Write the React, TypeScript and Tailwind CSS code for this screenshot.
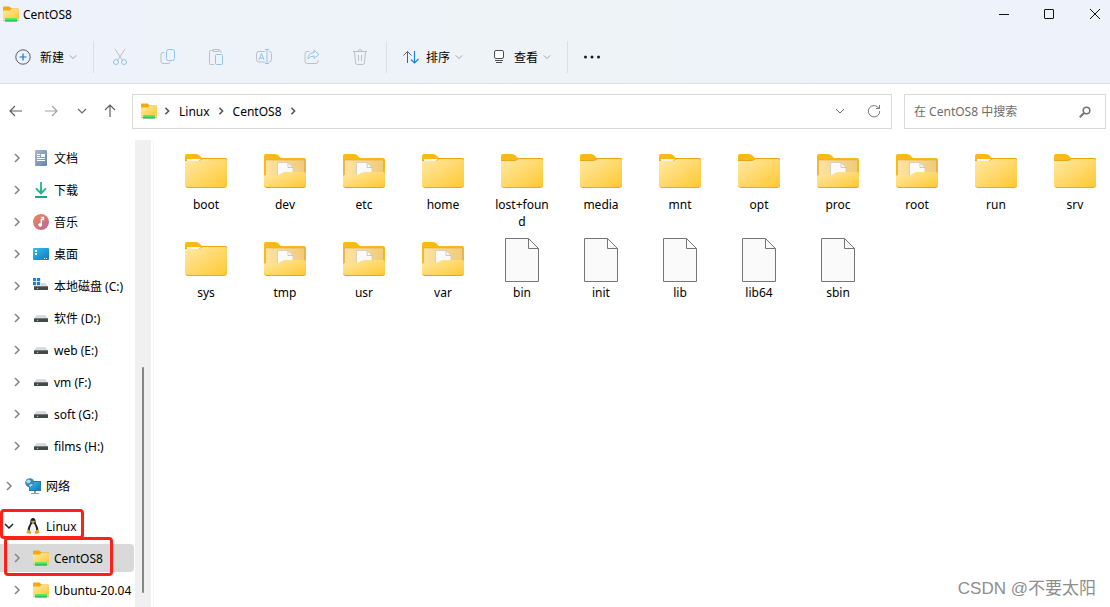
import type { ReactNode } from "react";

type ChevronProps = { className?: string; size?: string };

function Chevron({ className = "", size = "h-[10px] w-[10px]" }: ChevronProps) {
  return (
    <svg viewBox="0 0 10 10" className={`shrink-0 ${size} ${className}`} fill="none" stroke="currentColor" aria-hidden="true">
      <path d="M3 1l4 4-4 4" />
    </svg>
  );
}

function ChevronDown({ className = "", size = "h-[10px] w-[10px]" }: ChevronProps) {
  return (
    <svg viewBox="0 0 10 10" className={`shrink-0 ${size} ${className}`} fill="none" stroke="currentColor" aria-hidden="true">
      <path d="M1 3l4 4 4-4" />
    </svg>
  );
}

// every gradient used by the icons below, defined once for the page
function Gradients() {
  return (
    <svg width="0" height="0" className="absolute" aria-hidden="true">
      <defs>
        <linearGradient id="front" x1="0" y1="0" x2="1" y2="1">
          <stop offset="0" stopColor="#ffe9a6" />
          <stop offset="1" stopColor="#ffc831" />
        </linearGradient>
        <linearGradient id="inside" x1="0" y1="0" x2="1" y2="0">
          <stop offset="0" stopColor="#fde3a0" />
          <stop offset="1" stopColor="#f0cb7a" />
        </linearGradient>
        <linearGradient id="green" x1="0" y1="0" x2="0" y2="1">
          <stop offset="0" stopColor="#5cf06c" />
          <stop offset="0.6" stopColor="#44dd5c" />
          <stop offset="1" stopColor="#118a43" />
        </linearGradient>
        <linearGradient id="doc" x1="0" y1="0" x2="1" y2="1">
          <stop offset="0" stopColor="#a5bbd4" />
          <stop offset="1" stopColor="#6482a6" />
        </linearGradient>
        <linearGradient id="down" x1="0" y1="0" x2="0" y2="1">
          <stop offset="0" stopColor="#35c98f" />
          <stop offset="1" stopColor="#12a68c" />
        </linearGradient>
        <linearGradient id="music" x1="0" y1="0" x2="1" y2="1">
          <stop offset="0" stopColor="#f08a55" />
          <stop offset="1" stopColor="#b565a0" />
        </linearGradient>
        <linearGradient id="screen" x1="0" y1="0" x2="1" y2="1">
          <stop offset="0" stopColor="#2fc6ea" />
          <stop offset="1" stopColor="#1273c4" />
        </linearGradient>
      </defs>
    </svg>
  );
}

function MountIcon() {
  return (
    <svg viewBox="0 0 16 16" className="h-4 w-4 shrink-0" aria-hidden="true">
      <path d="M0 1.500Q0 .5 1 .5h5.500l2 2H15q1 0 1 1V6H0z" fill="#f0a90f" />
      <path d="M0 4.500h6.500l2-1.500H15q1 0 1 1v9q0 .5-.5.5H.5q-.5 0-.5-.5z" fill="url(#front)" />
      <path d="M0 14h16v1H0z" fill="#bcc4be" />
      <path d="M2 12h12v3.500H2z" fill="url(#green)" />
    </svg>
  );
}

function DocumentsIcon() {
  return (
    <svg viewBox="0 0 16 16" className="h-4 w-4 shrink-0" aria-hidden="true">
      <rect x="2" width="12" height="16" rx="1" fill="url(#doc)" />
      <path d="M4 4.500h3M4 6.500h3M4 8.500h8M4 10.500h8" stroke="#fff" />
      <rect x="8" y="4" width="4" height="3" fill="#fff" />
    </svg>
  );
}

function DownloadsIcon() {
  return (
    <svg viewBox="0 0 16 16" className="h-4 w-4 shrink-0" aria-hidden="true">
      <path d="M7 0h2v9l3.300-3.300 1.400 1.400L8 12.800 2.300 7.100l1.400-1.400L7 9zM2 14h12v2H2z" fill="url(#down)" />
    </svg>
  );
}

function MusicIcon() {
  return (
    <svg viewBox="0 0 16 16" className="h-4 w-4 shrink-0" aria-hidden="true">
      <circle cx="8" cy="8" r="8" fill="url(#music)" />
      <path d="M8.300 3.500h2.200v2H8.300v5" fill="none" stroke="#fff" strokeWidth="1.400" />
      <circle cx="7.200" cy="10.800" r="1.900" fill="#fff" />
    </svg>
  );
}

function DesktopIcon() {
  return (
    <svg viewBox="0 0 16 16" className="h-4 w-4 shrink-0" aria-hidden="true">
      <rect y="2" width="16" height="12" rx="1" fill="url(#screen)" />
      <path d="M2 4h2v2H2zM2 7h2v2H2z" fill="#fff" />
      <path d="M11 12h1v1h-1zM13 12h1v1h-1z" fill="#d8efff" />
    </svg>
  );
}

function DriveIcon({ system = false }: { system?: boolean }) {
  return (
    <svg viewBox="0 0 16 16" className="h-4 w-4 shrink-0" aria-hidden="true">
      <path d="M3.500 5h9L15 9H1z" fill="#d9dbdd" />
      <rect x="1" y="8" width="14" height="4" rx="0.500" fill="#454749" />
      <path d="M1 8h14v1H1z" fill="#77797b" />
      <circle cx="4.500" cy="10.500" r="0.700" fill="#4df07a" />
      {system && (
        <>
          <path d="M0 0h8v8H0z" fill="#fff" />
          <path d="M0 0h3.200v3.200H0zM4 0h3.200v3.200H4zM0 4h3.200v3.200H0zM4 4h3.200v3.200H4z" fill="#1583d8" />
        </>
      )}
    </svg>
  );
}

function NetworkIcon() {
  return (
    <svg viewBox="0 0 16 16" className="h-4 w-4 shrink-0" aria-hidden="true">
      <path d="M9 12h2v3H9zM6 15h8v1H6z" fill="#8e9aa5" />
      <rect x="4" y="3" width="12" height="10" fill="#2d79ad" />
      <rect x="5" y="4" width="10" height="8" fill="url(#screen)" />
      <circle cx="4.800" cy="4.800" r="4.600" fill="#3b86b8" />
      <path d="M1 3q3-3 5 0-1 3-4 2zM4 7q3-2 4 0l-3 2z" fill="#a9dcef" />
    </svg>
  );
}

function TuxIcon() {
  return (
    <svg viewBox="0 0 16 16" className="h-4 w-4 shrink-0" aria-hidden="true">
      <path d="M8 0q2.600 0 2.600 3.500 0 2 1.700 4.500 1.700 3 .7 6H3q-1-3 .7-6 1.700-2.500 1.700-4.500Q5.400 0 8 0z" fill="#1d1d1d" />
      <path d="M8 5.500q1.600 0 2 2 1.800 3 1.200 5.500-1 1.500-3.200 1.500T4.800 13Q4.200 10.500 6 7.500q.4-2 2-2z" fill="#f2f2f2" />
      <path d="M6.500 2.800h1.100V4H6.500zM8.400 2.800h1.100V4H8.400z" fill="#fff" />
      <path d="M6.300 4.600L8 3.900l1.700.7L8 6z" fill="#e8a91c" />
      <path d="M2 12.500l2-1 2.500 3.500-1 1-4-1zM14 12.500l-2-1L9.500 15l1 1 4-1z" fill="#e2a324" />
    </svg>
  );
}

type EntryKind = "empty" | "folder" | "filled" | "file";

function EntryIcon({ kind }: { kind: EntryKind }) {
  if (kind === "file") {
    return (
      <svg viewBox="0 0 48 48" className="h-12 w-12" aria-hidden="true">
        <path d="M7.500 3.500h23l10 10v33h-33z" fill="#fafafa" stroke="#757575" />
        <path d="M30.500 3.500v10h10" fill="none" stroke="#757575" />
      </svg>
    );
  }
  return (
    <svg viewBox="0 0 48 48" className="h-12 w-12" aria-hidden="true">
      <path d="M3 9q0-2 2-2h9q2 0 3.500 1.500L20 11h23q2 0 2 2v22H3z" fill="#fbb917" />
      {kind === "filled" ? (
        <>
          <path d="M4.500 13h39v20h-39z" fill="url(#inside)" stroke="#dfa944" strokeWidth="0.600" />
          <path d="M16.500 15.500H27l5 5V31H16.500z" fill="#fafafa" stroke="#c9c5bd" strokeWidth="0.700" />
          <path d="M27 15.500v5h5" fill="none" stroke="#b9b5ad" strokeWidth="0.700" />
          <path d="M3 30q0-2 2-2h11q2 0 4-1.500t4-1.500h19q2 0 2 2v12q0 2-2 2H5q-2 0-2-2z" fill="url(#front)" />
        </>
      ) : (
        <>
          <path d="M3 13h12q2 0 4-1l1-1h23q2 0 2 2v3H3z" fill="#e9a512" />
          {kind === "folder" && <path d="M5 12h14l-3 2.500H5z" fill="#f4f7fb" />}
          <path d="M3 14h13q2 0 3-1t3-1h21q2 0 2 2v25q0 1.500-2 1.500H5q-2 0-2-1.500z" fill="url(#front)" />
        </>
      )}
      <path d="M4 39.500q.5 1 2 1h36q1.500 0 2-1" fill="none" stroke="#d79b25" strokeWidth="0.800" />
    </svg>
  );
}

const ENTRIES: { name: string; kind: EntryKind }[] = [
  { name: "boot", kind: "folder" },
  { name: "dev", kind: "filled" },
  { name: "etc", kind: "filled" },
  { name: "home", kind: "folder" },
  { name: "lost+found", kind: "empty" },
  { name: "media", kind: "empty" },
  { name: "mnt", kind: "folder" },
  { name: "opt", kind: "empty" },
  { name: "proc", kind: "filled" },
  { name: "root", kind: "filled" },
  { name: "run", kind: "folder" },
  { name: "srv", kind: "empty" },
  { name: "sys", kind: "folder" },
  { name: "tmp", kind: "filled" },
  { name: "usr", kind: "filled" },
  { name: "var", kind: "filled" },
  { name: "bin", kind: "file" },
  { name: "init", kind: "file" },
  { name: "lib", kind: "file" },
  { name: "lib64", kind: "file" },
  { name: "sbin", kind: "file" },
];

const PLACES: { label: string; icon: ReactNode }[] = [
  { label: "文档", icon: <DocumentsIcon /> },
  { label: "下载", icon: <DownloadsIcon /> },
  { label: "音乐", icon: <MusicIcon /> },
  { label: "桌面", icon: <DesktopIcon /> },
  { label: "本地磁盘 (C:)", icon: <DriveIcon system /> },
  { label: "软件 (D:)", icon: <DriveIcon /> },
  { label: "web (E:)", icon: <DriveIcon /> },
  { label: "vm (F:)", icon: <DriveIcon /> },
  { label: "soft (G:)", icon: <DriveIcon /> },
  { label: "films (H:)", icon: <DriveIcon /> },
];

type TreeItemProps = {
  label: string;
  icon: ReactNode;
  root?: boolean;
  open?: boolean;
  selected?: boolean;
  children?: ReactNode;
};

function TreeItem({ label, icon, root, open, selected, children }: TreeItemProps) {
  return (
    <li className="relative flex h-8 items-center">
      <button
        type="button"
        className={`flex w-full items-center whitespace-nowrap ${root ? "pl-1" : "pl-3"} ${
          selected ? "h-7 rounded-r-sm bg-[#d9d9d9]" : "h-8"
        }`}
      >
        {open ? (
          <ChevronDown className="stroke-[1.5] text-[#222]" />
        ) : (
          <Chevron className="stroke-[1.5] text-[#858585]" />
        )}
        <span className="ml-[11px] flex items-center gap-[5px]">
          {icon}
          {label}
        </span>
      </button>
      {children}
    </li>
  );
}

function Sidebar() {
  return (
    <nav aria-label="导航窗格" className="w-[134px] shrink-0 pt-[2px]">
      <ul>
        {PLACES.map((place) => (
          <TreeItem key={place.label} label={place.label} icon={place.icon} />
        ))}
      </ul>
      <ul className="mt-2">
        <TreeItem root label="网络" icon={<NetworkIcon />} />
      </ul>
      <ul className="mt-2">
        <TreeItem root open label="Linux" icon={<TuxIcon />}>
          <span className="pointer-events-none absolute -top-px left-0 h-[30px] w-[84px] rounded-sm border-3 border-[#ff2016]" />
        </TreeItem>
        <TreeItem selected label="CentOS8" icon={<MountIcon />}>
          <span className="pointer-events-none absolute -top-[5px] left-1 h-[39px] w-[109px] rounded-sm border-3 border-[#ff2016]" />
        </TreeItem>
        <TreeItem label="Ubuntu-20.04" icon={<MountIcon />} />
      </ul>
    </nav>
  );
}

type ToolButtonProps = { label: string; children: ReactNode };

function ToolButton({ label, children }: ToolButtonProps) {
  return (
    <button type="button" aria-label={label} className="flex h-8 w-12 items-center justify-center">
      <svg viewBox="0 0 18 18" className="h-[18px] w-[18px]" fill="none" stroke="#bcc0c5" aria-hidden="true">
        {children}
      </svg>
    </button>
  );
}

function Divider() {
  return <span className="h-8 w-px bg-[#dcdfe4]" />;
}

function TitleBar() {
  return (
    <div className="flex h-[30px] items-center pb-[2px] pl-[3px]">
      <MountIcon />
      <h1 className="ml-1">CentOS8</h1>
      <div className="ml-auto flex">
        <button type="button" aria-label="最小化" className="flex h-7 w-11 items-center justify-center">
          <svg viewBox="0 0 10 10" className="h-[10px] w-[10px]" stroke="#111">
            <path d="M0 5.500h10" />
          </svg>
        </button>
        <button type="button" aria-label="最大化" className="mr-2 flex h-7 w-[46px] items-center justify-center">
          <svg viewBox="0 0 10 10" className="h-[10px] w-[10px]" fill="none" stroke="#111">
            <rect x="0.500" y="0.500" width="9" height="9" rx="0.500" />
          </svg>
        </button>
        <button type="button" aria-label="关闭" className="flex h-7 w-[30px] items-center justify-center">
          <svg viewBox="0 0 10 10" className="h-[10px] w-[10px]" stroke="#111">
            <path d="M0 0l10 10M10 0L0 10" />
          </svg>
        </button>
      </div>
    </div>
  );
}

function Toolbar() {
  return (
    <div className="flex h-[53px] items-center pt-px">
      <button type="button" className="flex h-8 w-[93px] items-center pl-[15px]">
        <svg viewBox="0 0 16 16" className="h-4 w-4" fill="none" aria-hidden="true">
          <circle cx="8" cy="8" r="7.200" stroke="#5b5d60" />
          <path d="M8 4.500v7M4.500 8h7" stroke="#1477cf" strokeWidth="1.200" />
        </svg>
        <span className="ml-[9px]">新建</span>
        <ChevronDown size="h-2 w-2" className="ml-[5px] text-[#8a8d91]" />
      </button>
      <Divider />
      <div className="ml-[2px] flex">
        <ToolButton label="剪切">
          <path d="M4 1l7.500 11.500M14 1L6.500 12.500" />
          <circle cx="5" cy="14" r="2.500" stroke="#8fc4ea" />
          <circle cx="13" cy="14" r="2.500" stroke="#8fc4ea" />
        </ToolButton>
        <ToolButton label="复制">
          <path d="M5.500 4.500H4q-2 0-2 2v7q0 2 2 2h5q1.500 0 2-1.500" />
          <rect x="7.500" y="1.500" width="8" height="11" rx="2" stroke="#8fc4ea" />
        </ToolButton>
        <ToolButton label="粘贴">
          <path d="M7 16.500H3.500q-1 0-1-1v-12q0-1 1-1H6m6 0h1q1 0 1 1V5M6 1.500h6v2H6z" />
          <rect x="8.500" y="6.500" width="7" height="10" rx="1" stroke="#8fc4ea" />
        </ToolButton>
        <ToolButton label="重命名">
          <path d="M10 3.500H4q-2.500 0-2.500 2v6q0 2.500 2.500 2.500h6M14 3.500q2.500 0 2.500 2v6Q16.500 14 14 14" />
          <path d="M4 12l2.500-6.500L9 12M5 10h3M10 1.500h4M12 1.500v14M10 15.500h4" stroke="#8fc4ea" />
        </ToolButton>
        <ToolButton label="共享">
          <path d="M6.500 3.500H4q-2 0-2 2v8q0 2 2 2h9q2 0 2-2V12" />
          <path d="M11 2l5 4.500-5 4V8Q7 8 5 11q0-6 6-6.500z" stroke="#8fc4ea" />
        </ToolButton>
        <ToolButton label="删除">
          <path d="M2 3.500h14M7 3.500q0-2 2-2t2 2M3.500 3.500l1 11q0 2 2 2h5q2 0 2-2l1-11M7.500 7v6M10.500 7v6" />
        </ToolButton>
      </div>
      <span className="w-[2px]" />
      <Divider />
      <button type="button" className="flex h-8 items-center pl-4">
        <svg viewBox="0 0 16 16" className="h-4 w-4" fill="none" aria-hidden="true">
          <path d="M4.500 14V2.500M.5 6.500l4-4 4 4" stroke="#5b5d60" />
          <path d="M11.500 2v12M8 10.500l3.500 3.500 4-4" stroke="#1583d8" strokeWidth="1.200" />
        </svg>
        <span className="ml-[7px]">排序</span>
        <ChevronDown size="h-2 w-2" className="ml-[5px] text-[#8a8d91]" />
      </button>
      <button type="button" className="ml-7 flex h-8 items-center">
        <svg viewBox="0 0 16 16" className="h-4 w-4" fill="none" stroke="#4d4f52" aria-hidden="true">
          <rect x="3.500" y="1.500" width="9" height="8" rx="1.500" fill="#fff" />
          <path d="M4 11.500h8M5 13.500h6" />
        </svg>
        <span className="ml-[7px]">查看</span>
        <ChevronDown size="h-2 w-2" className="ml-[5px] text-[#8a8d91]" />
      </button>
      <span className="w-4" />
      <Divider />
      <button type="button" aria-label="更多" className="flex h-8 w-12 items-center justify-center">
        <svg viewBox="0 0 16 4" className="h-1 w-4" fill="#1c1c1c" aria-hidden="true">
          <circle cx="1.500" cy="2" r="1.500" />
          <circle cx="8" cy="2" r="1.500" />
          <circle cx="14.500" cy="2" r="1.500" />
        </svg>
      </button>
    </div>
  );
}

function ArrowButton({ label, className, d }: { label: string; className: string; d: string }) {
  return (
    <button type="button" aria-label={label} className={`flex h-8 items-center justify-center ${className}`}>
      <svg viewBox="0 0 14 14" className="h-[14px] w-[14px]" fill="none" stroke="currentColor" strokeWidth="1.200" aria-hidden="true">
        <path d={d} />
      </svg>
    </button>
  );
}

function AddressRow() {
  return (
    <div className="flex items-center pt-[10px] pr-1 pb-[11px]">
      <div className="flex w-[132px] shrink-0 pb-px">
        <ArrowButton label="后退" className="w-8 text-[#5f5f5f]" d="M13 7H1M6 2L1 7l5 5" />
        <ArrowButton label="前进" className="w-[38px] text-[#a3a3a3]" d="M1 7h12M8 2l5 5-5 5" />
        <ArrowButton label="最近位置" className="w-6 text-[#6a6a6a]" d="M3 5l4 4 4-4" />
        <ArrowButton label="上移" className="w-8 text-[#5f5f5f]" d="M7 13V1M2 6l5-5 5 5" />
      </div>
      <div className="flex h-[35px] min-w-0 flex-1 items-center border border-[#d9d9d9] pb-px pl-2">
        <MountIcon />
        <Chevron size="h-2 w-2" className="ml-[6px] stroke-2 text-[#555]" />
        <a href="#linux" className="ml-2">Linux</a>
        <Chevron size="h-2 w-2" className="ml-[7px] stroke-2 text-[#555]" />
        <a href="#centos8" className="ml-2">CentOS8</a>
        <Chevron size="h-2 w-2" className="ml-[7px] stroke-2 text-[#555]" />
        <button type="button" aria-label="历史记录" className="ml-auto flex h-8 w-[34px] items-center justify-center text-[#6a6a6a]">
          <ChevronDown />
        </button>
        <button type="button" aria-label="刷新" className="flex h-8 w-[34px] items-center justify-center">
          <svg viewBox="0 0 14 14" className="h-[14px] w-[14px]" fill="none" stroke="#777" aria-hidden="true">
            <path d="M12 4.500A5.700 5.700 0 1 0 12.700 7M12.500 1v3.500H9" />
          </svg>
        </button>
      </div>
      <label className="ml-3 flex h-[35px] w-[202px] items-center border border-[#d9d9d9] pr-[14px] pl-[9px]">
        <input
          type="search"
          aria-label="搜索"
          placeholder="在 CentOS8 中搜索"
          className="min-w-0 flex-1 outline-none placeholder:text-[#6d6d6d]"
        />
        <svg viewBox="0 0 12 12" className="h-3 w-3" fill="none" stroke="#757575" strokeWidth="1.600" aria-hidden="true">
          <circle cx="7.500" cy="4.500" r="3.300" />
          <path d="M5 7L.8 11.200" strokeWidth="2" />
        </svg>
      </label>
    </div>
  );
}

export default function App() {
  return (
    <div className="relative flex min-h-screen flex-col bg-white font-['Noto_Sans','Noto_Sans_CJK_SC',sans-serif] text-[12px] leading-[17px] text-black">
      <Gradients />
      <header>
        <div className="border-b border-[#dbdee3] bg-linear-to-r from-[#eef2fb] via-[#eef3f7] to-[#eef2fb]">
          <TitleBar />
          <Toolbar />
        </div>
        <AddressRow />
      </header>
      <div className="flex flex-1">
        <Sidebar />
        <div className="ml-px flex w-4 shrink-0 justify-center bg-[#f0f0f0] pt-[227px] pb-[14px]">
          <span className="w-[2px] rounded-full bg-[#868686]" />
        </div>
        <main className="ml-[2px] flex-1 border-l border-[#f5f5f5] pt-[7px] pl-[17px]">
          <ul className="grid grid-cols-[repeat(auto-fill,70px)] gap-x-[9px] gap-y-1">
            {ENTRIES.map((entry) => (
              <li key={entry.name}>
                <button type="button" className="flex min-h-[84px] w-full flex-col items-center gap-px px-[6px]">
                  <EntryIcon kind={entry.kind} />
                  <span className="w-full text-center break-words">{entry.name}</span>
                </button>
              </li>
            ))}
          </ul>
        </main>
      </div>
      <p className="absolute right-[14px] bottom-2 font-['Liberation_Sans','Noto_Sans_CJK_SC',sans-serif] text-[17px] leading-5 text-[#8e8e8e]">
        CSDN @不要太阳
      </p>
    </div>
  );
}
